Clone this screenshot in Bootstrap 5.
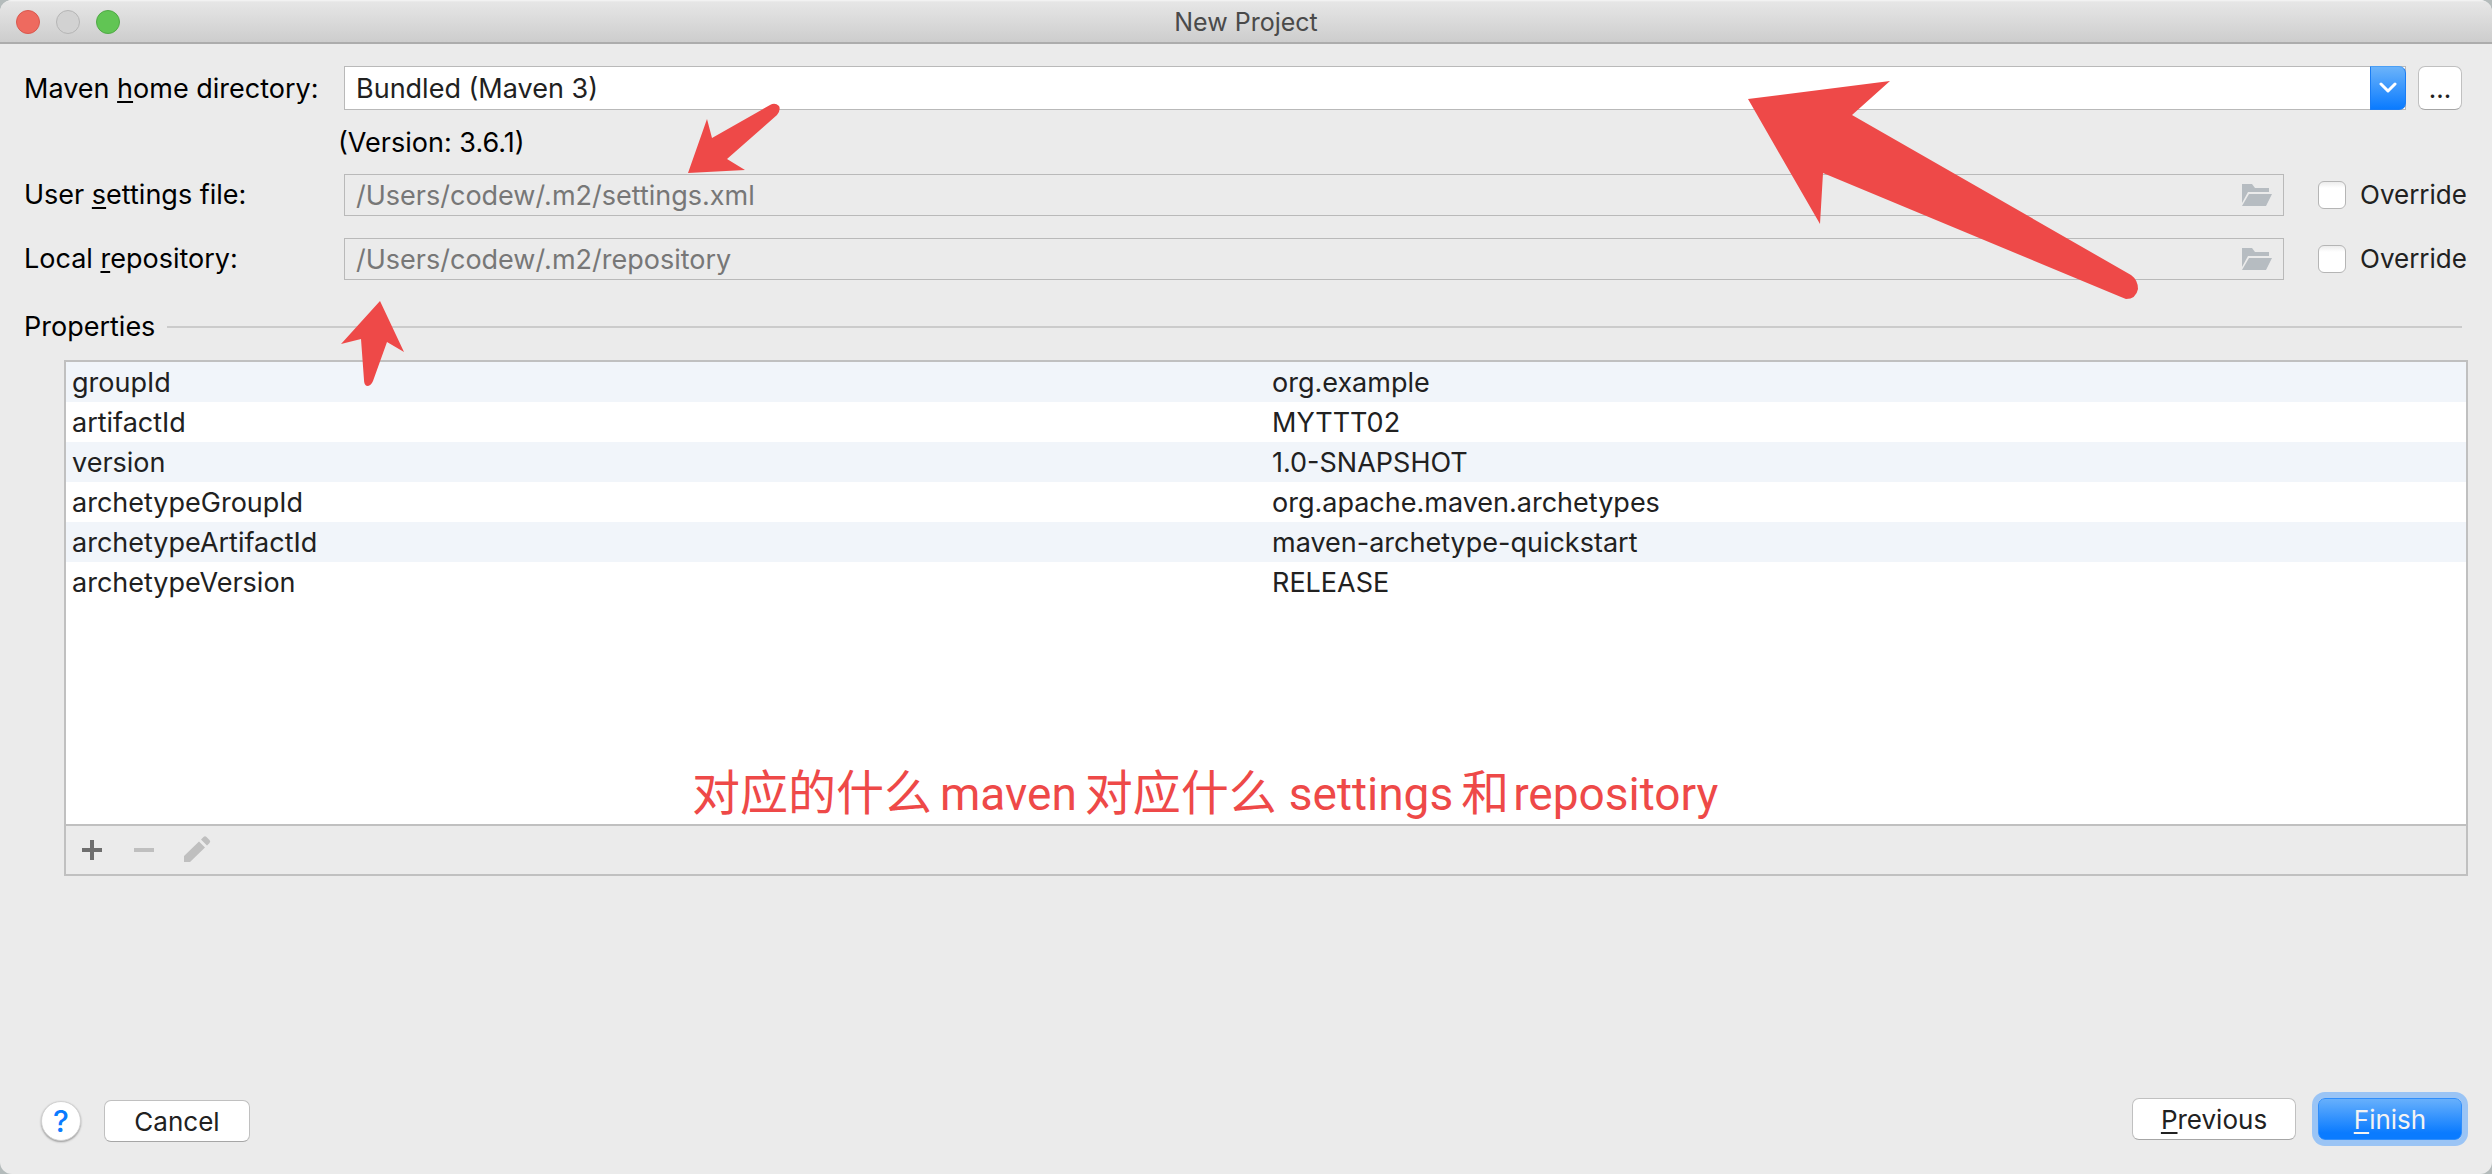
<!DOCTYPE html>
<html lang="en">
<head>
<meta charset="utf-8">
<meta name="viewport" content="width=device-width, initial-scale=1">
<title>New Project</title>
<link href="https://cdn.jsdelivr.net/npm/bootstrap@5.3.0/dist/css/bootstrap.min.css" rel="stylesheet">
<style>
  body { background: #b4bbbb; font-family: Inter, "Noto Sans CJK SC", sans-serif; font-size: 27px; line-height: 40px; color: #000; }
  .window { background: #ebebeb; border-radius: 12px; }
  .titlebar { height: 44px; padding-top: 2px; background: linear-gradient(#f6f6f6 0, #e6e6e6 2px, #cdcdcd 42px); border-bottom: 2px solid #acacac; color: #4a4a4a; font-size: 25px; }
  .lights { left: 16px; top: 10px; gap: 16px; }
  .light { width: 24px; height: 24px; border: 1px solid #b5b5b5; border-radius: 50%; background: #d2d2d2; padding: 0; }
  .light-close { background: #ee6a5f; border-color: #d9584e; }
  .light-zoom { background: #61c554; border-color: #50a946; }
  u { text-decoration-thickness: 2px; text-underline-offset: 3px; text-decoration-skip-ink: none; }
  .settings { padding: 22px 24px 0 24px; }
  .field-label { width: 320px; flex: none; }
  .field { border: 1px solid #b9b9b9; border-radius: 0; padding: 0 11px; font-size: 27px; line-height: 38px; color: #212121; background: #fff; }
  .home-row, .props-head { padding-right: 6px; }
  .home-row .field-label, select.field { padding-top: 2px; }
  select.field { height: 44px; appearance: none; }
  .path-field { height: 42px; }
  .path-field, .path-field:disabled { background: #ebebeb; color: #777; opacity: 1; }
  .combo-arrow { top: 0; right: 0; width: 36px; height: 44px; border: 1px solid #1a7df5; border-top-color: #4a9ff5; border-radius: 0 7px 7px 0; background: linear-gradient(#6bb3fa, #0a7bff); pointer-events: none; }
  .mac-btn { height: 42px; padding: 2px 0 0; border: 1px solid #c0c0c0; border-bottom-color: #a6a6a6; border-radius: 7px; background: #fff; font-size: 26px; line-height: 38px; color: #212121; }
  .browse { width: 44px; height: 44px; margin-left: 12px; }
  .version { margin-left: 314px; padding: 13px 0 11px; }
  .repo-row { margin-top: 22px; }
  .props-head { margin-top: 27px; }
  .folder { right: 11px; top: 9px; }
  .override { width: 184px; padding-left: 34px; color: #212121; flex: none; font-size: 26px; }
  .override .form-check-input { width: 28px; height: 28px; margin: 0 14px 0 0; border: 1px solid #b5b5b5; border-radius: 6px; background: linear-gradient(#ececec, #fff 6px); }
  .rule { height: 2px; background: #cbcbcb; margin-left: 12px; }
  .panel { margin: 13px 24px 0 64px; border: 2px solid #c0c0c0; }
  .panel-list { min-height: 462px; background: #fff; }
  .props { table-layout: fixed; color: #212121; }
  .props td { padding: 2px 6px 0; height: 40px; line-height: 38px; }
  .props tr:nth-child(odd) { background: #f1f5fa; }
  .tools { height: 50px; border-top: 2px solid #c0c0c0; padding-left: 12px; gap: 20px; }
  .tool { width: 32px; height: 32px; padding: 0; border: 0; background: none; line-height: 0; }
  .foot { padding: 0 30px 32px 41px; }
  .help { width: 40px; height: 40px; padding: 0; border: 1px solid #d2d2d2; border-radius: 50%; background: #fff; box-shadow: 0 1px 2px #999; color: #0a7bff; font-size: 30px; line-height: 38px; font-weight: 500; }
  .cancel { width: 146px; margin-left: 23px; }
  .previous { width: 164px; }
  .finish { width: 144px; margin-left: 22px; background: linear-gradient(#67b0fc, #0a7bff 85%); border-color: #2f8dfb; color: #f3f3f3; box-shadow: 0 0 0 6px #9ac4f5; }
  .foot-right { margin-bottom: 2px; }
  .arrows { left: 0; top: 0; pointer-events: none; }
  .note { left: 692px; top: 762px; color: #ee4948; font-family: Roboto, "Noto Sans CJK SC", sans-serif; font-size: 48px; line-height: 64px; }
  .note span { font-size: 46px; }
</style>
<script src="https://cdn.jsdelivr.net/npm/bootstrap@5.3.0/dist/js/bootstrap.bundle.min.js"></script>
</head>
<body>
<div class="window position-relative d-flex flex-column min-vh-100 overflow-hidden">
  <header class="titlebar position-relative d-flex align-items-center justify-content-center">
    <div class="lights position-absolute d-flex">
      <button class="light light-close" aria-label="Close"></button>
      <button class="light" aria-label="Minimize" disabled></button>
      <button class="light light-zoom" aria-label="Zoom"></button>
    </div>
    <span>New Project</span>
  </header>

  <main class="flex-grow-1">
    <form class="settings">
      <div class="home-row d-flex align-items-center">
        <label class="field-label" for="home">Maven <u>h</u>ome directory:</label>
        <div class="position-relative flex-grow-1 d-flex">
          <select class="field w-100" id="home"><option>Bundled (Maven 3)</option></select>
          <span class="combo-arrow position-absolute d-flex align-items-center justify-content-center">
            <svg width="18" height="12" viewBox="0 0 18 12" fill="none" stroke="#fff" stroke-width="3" stroke-linecap="round" stroke-linejoin="round"><path d="M2 2l7 7 7-7"/></svg>
          </span>
        </div>
        <button type="button" class="mac-btn browse">...</button>
      </div>
      <div class="version">(Version: 3.6.1)</div>
      <div class="d-flex align-items-center">
        <label class="field-label" for="ufile">User <u>s</u>ettings file:</label>
        <div class="position-relative flex-grow-1 d-flex">
          <input class="field path-field w-100" id="ufile" type="text" value="/Users/codew/.m2/settings.xml" disabled>
          <svg class="folder position-absolute" width="32" height="24" viewBox="0 0 32 24" fill="#b6bcc1"><path d="M1 1h10l3 4h14v4H7L1 20zM8 11h23l-6 12H1z"/></svg>
        </div>
        <div class="override d-flex align-items-center"><input class="form-check-input" type="checkbox" id="o1"><label for="o1">Override</label></div>
      </div>
      <div class="repo-row d-flex align-items-center">
        <label class="field-label" for="repo">Local <u>r</u>epository:</label>
        <div class="position-relative flex-grow-1 d-flex">
          <input class="field path-field w-100" id="repo" type="text" value="/Users/codew/.m2/repository" disabled>
          <svg class="folder position-absolute" width="32" height="24" viewBox="0 0 32 24" fill="#b6bcc1"><path d="M1 1h10l3 4h14v4H7L1 20zM8 11h23l-6 12H1z"/></svg>
        </div>
        <div class="override d-flex align-items-center"><input class="form-check-input" type="checkbox" id="o2"><label for="o2">Override</label></div>
      </div>
      <div class="props-head d-flex align-items-center">
        <span>Properties</span><div class="rule flex-grow-1"></div>
      </div>
    </form>

    <section class="panel">
      <div class="panel-list">
        <table class="props w-100">
          <tbody>
            <tr><td>groupId</td><td>org.example</td></tr>
            <tr><td>artifactId</td><td>MYTTT02</td></tr>
            <tr><td>version</td><td>1.0-SNAPSHOT</td></tr>
            <tr><td>archetypeGroupId</td><td>org.apache.maven.archetypes</td></tr>
            <tr><td>archetypeArtifactId</td><td>maven-archetype-quickstart</td></tr>
            <tr><td>archetypeVersion</td><td>RELEASE</td></tr>
          </tbody>
        </table>
      </div>
      <div class="tools d-flex align-items-center">
        <button class="tool" aria-label="Add"><svg width="32" height="32" viewBox="0 0 32 32" fill="#6e6e6e"><path d="M12 6h4v8h8v4h-8v8h-4v-8H4v-4h8z"/></svg></button>
        <button class="tool" aria-label="Remove" disabled><svg width="32" height="32" viewBox="0 0 32 32" fill="#bfbfbf"><path d="M4 14h20v4H4z"/></svg></button>
        <button class="tool" aria-label="Edit" disabled><svg width="32" height="32" viewBox="0 0 32 32" fill="#bfbfbf"><path d="M2 28v-6L17 7.500l6 6L8 28zM19 5.500l2.500-2.500q1.500-1.500 3 0l3 3q1.500 1.500 0 3L25 11.500z"/></svg></button>
      </div>
    </section>
  </main>

  <footer class="foot d-flex align-items-end justify-content-between">
    <div class="d-flex align-items-center">
      <button class="help" aria-label="Help">?</button>
      <button class="mac-btn cancel">Cancel</button>
    </div>
    <div class="foot-right d-flex">
      <button class="mac-btn previous"><u>P</u>revious</button>
      <button class="mac-btn finish"><u>F</u>inish</button>
    </div>
  </footer>

  <svg class="arrows position-absolute" width="2200" height="400" viewBox="0 0 2200 400" fill="#ee4948">
    <path d="M1748 99L1890 81L1852 115L2131 275Q2138 280 2138 289Q2136 299 2126 299L2121 297L1823 173L1820 224L1775 146Z"/>
    <path d="M688 173L707 119L712 138L770 105Q775 102 779 106Q781 110 777 115L727 159L745 170Z"/>
    <path d="M380 301L404 352L387 342L373 381Q371 386 367 386Q364 385 364 380L361 339L341 344Z"/>
  </svg>
  <div class="note position-absolute text-nowrap">对应的什么<span class="mx-2">maven</span>对应什么 <span class="me-2">settings</span>和<span class="ms-1">repository</span></div>
</div>
</body>
</html>
